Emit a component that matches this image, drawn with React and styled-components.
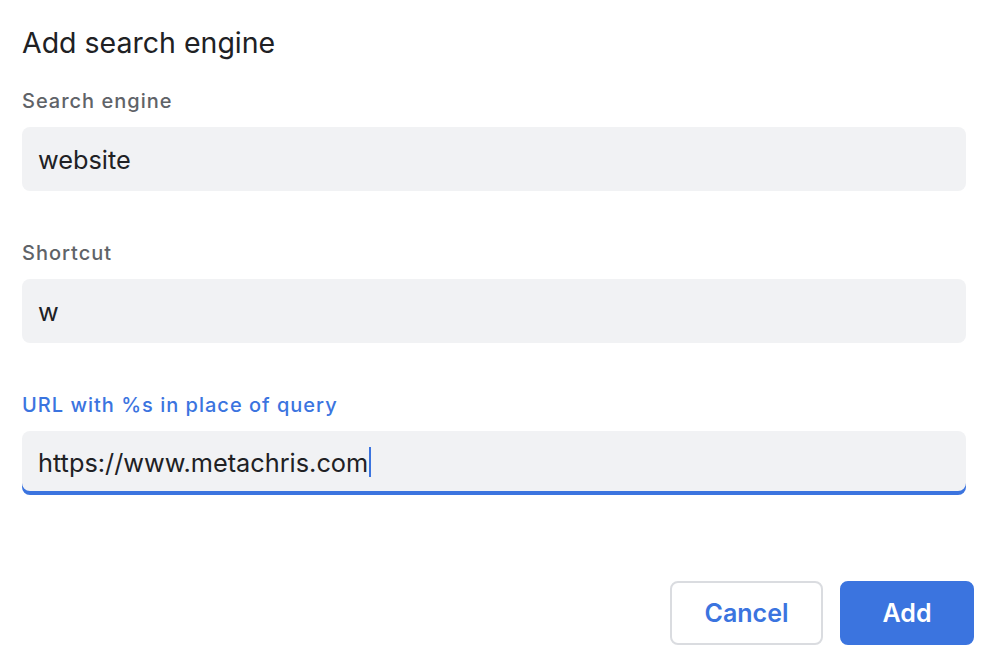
import React from "react";
import styled, { createGlobalStyle } from "styled-components";

const Global = createGlobalStyle`
  html, body { margin: 0; padding: 0; background: #ffffff; }
  body { font-family: Inter, "Noto Sans", "Liberation Sans", sans-serif; }
  * { box-sizing: border-box; }
`;

const Dialog = styled.div`
  width: 994px;
  height: 666px;
  padding: 26px 20px 21px 22px;
  display: flex;
  flex-direction: column;
`;

const Title = styled.h1`
  margin: 0;
  font-size: 28.5px;
  line-height: 34px;
  font-weight: 400;
  color: #202124;
`;

const Form = styled.div`
  display: flex;
  flex-direction: column;
  width: 944px;
  margin-top: 29px;
  gap: 50px;
`;

const Field = styled.div`
  display: flex;
  flex-direction: column;
  gap: 14px;
`;

const Label = styled.label`
  font-size: 20px;
  line-height: 24px;
  font-weight: 500;
  letter-spacing: 1px;
  color: ${(p) => (p.$focused ? "#3b74df" : "#5f6368")};
`;

const InputBox = styled.div`
  height: 64px;
  background: #f1f2f4;
  border-radius: 8px;
  padding: 0 16px;
  display: flex;
  align-items: center;
  font-size: 25.3px;
  color: #202124;
  box-shadow: ${(p) => (p.$focused ? "inset 0 -4px 0 #3b74df" : "none")};
  padding-bottom: ${(p) => (p.$focused ? "2px" : "0")};
`;

const Caret = styled.span`
  display: inline-block;
  width: 2px;
  height: 30px;
  background: #3b74df;
  margin-left: 1px;
`;

const Actions = styled.div`
  margin-top: auto;
  display: flex;
  justify-content: flex-end;
  gap: 17px;
`;

const Button = styled.button`
  height: 64px;
  border-radius: 8px;
  font-family: inherit;
  font-size: 25px;
  font-weight: 600;
  cursor: pointer;
  border: 2px solid ${(p) => (p.$primary ? "#3b74df" : "#dadce0")};
  background: ${(p) => (p.$primary ? "#3b74df" : "#ffffff")};
  color: ${(p) => (p.$primary ? "#ffffff" : "#3b74df")};
  width: ${(p) => p.$w}px;
`;

export default function App() {
  return (
    <>
      <Global />
      <Dialog>
        <Title>Add search engine</Title>
        <Form>
          <Field>
            <Label>Search engine</Label>
            <InputBox>website</InputBox>
          </Field>
          <Field>
            <Label>Shortcut</Label>
            <InputBox>w</InputBox>
          </Field>
          <Field>
            <Label $focused>URL with %s in place of query</Label>
            <InputBox $focused>
              https://www.metachris.com
              <Caret />
            </InputBox>
          </Field>
        </Form>
        <Actions>
          <Button $w={153}>Cancel</Button>
          <Button $primary $w={134}>Add</Button>
        </Actions>
      </Dialog>
    </>
  );
}
